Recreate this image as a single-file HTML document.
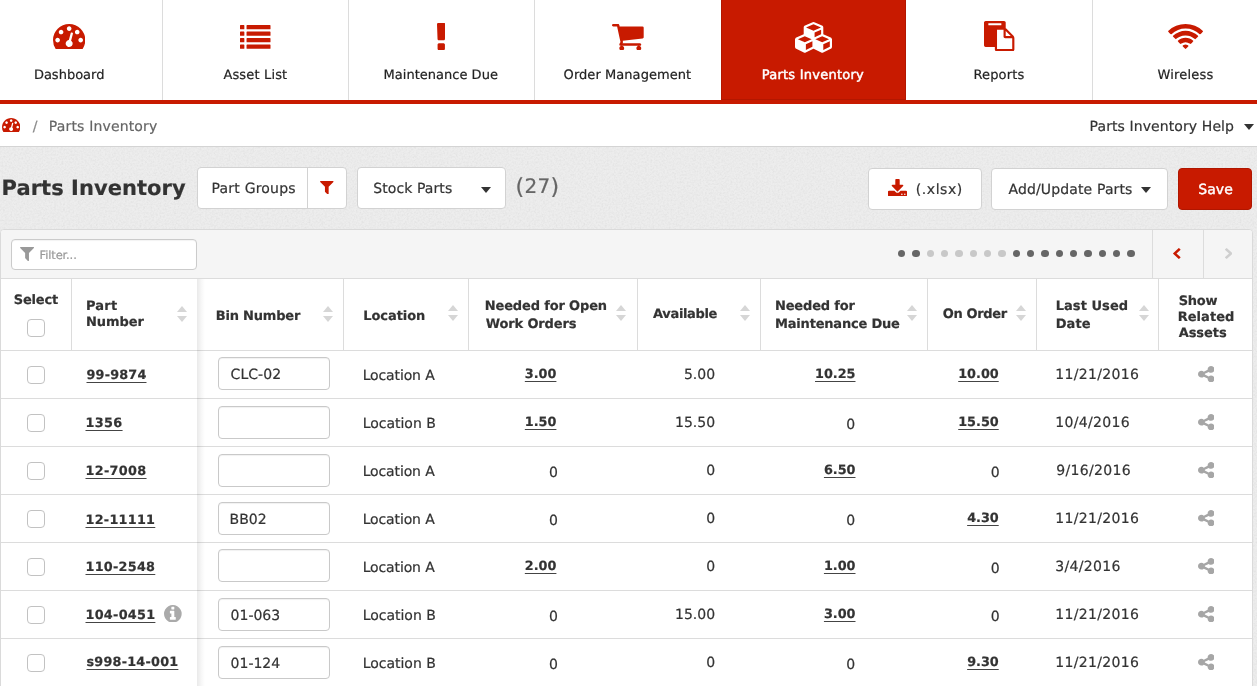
<!DOCTYPE html>
<html lang="en">
<head>
<meta charset="utf-8">
<title>Parts Inventory</title>
<style>
*{box-sizing:border-box;}
html,body{margin:0;padding:0;}
body{text-rendering:geometricPrecision;-webkit-text-stroke:0.2px;width:1257px;height:686px;overflow:hidden;position:relative;background:#e9e9e9;font-family:"DejaVu Sans","Liberation Sans",sans-serif;font-size:14px;color:#333;}
#app{position:absolute;left:0;top:0;width:1257px;height:686px;overflow:hidden;background:#ededed;will-change:transform;transform:translateZ(0);}
svg{display:block;}
.tx{position:absolute;white-space:nowrap;margin:0;}
/* nav */
.nav{position:absolute;left:0;top:0;height:100px;width:1257px;background:#fff;}
.acttab{position:absolute;left:721px;top:0;width:185px;height:100px;background:#c81a00;border:1px solid #b31700;border-top:none;}
.redline{position:absolute;left:0;top:100px;width:1257px;height:4px;background:#c81a00;}
/* breadcrumb */
.crumb{position:absolute;left:0;top:104px;width:1257px;height:43px;background:#fff;border-bottom:1px solid #d4d4d4;}
.caret{position:absolute;width:0;height:0;border-left:5.5px solid transparent;border-right:5.5px solid transparent;border-top:6px solid #333;}
/* title bar */
.btn{position:absolute;background:#fff;border:1px solid #d2d2d2;border-radius:4px;}
.btn.save{background:#c81a00;border-color:#b01600;}
/* panel */
.panel{position:absolute;left:0;top:229px;width:1253px;height:470px;background:#fff;border:1px solid #dadada;border-radius:4px 4px 0 0;}
.toolbar{position:absolute;left:1px;top:230px;width:1251px;height:48px;background:#f5f5f5;border-radius:3px 3px 0 0;}
.hl{position:absolute;left:1px;width:1251px;height:1px;background:#dcdcdc;}
.vl{position:absolute;width:1px;background:#dcdcdc;}
.filter{position:absolute;left:11px;top:239px;width:186px;height:31px;background:#fff;border:1px solid #cbcbcb;border-radius:4px;box-shadow:inset 0 1px 1px rgba(0,0,0,.05);}
.dot{position:absolute;width:7.4px;height:7.4px;border-radius:50%;background:#666;}
.dot.l{background:#c8c8c8;}
.cb{position:absolute;width:18px;height:18px;border:1px solid #c2c2c2;border-radius:4px;background:#fff;}
.lk{font-weight:bold;text-decoration:underline;text-decoration-thickness:1px;text-underline-offset:3px;text-decoration-color:#444;}
.bin{position:absolute;width:112px;height:33px;border:1px solid #c9c9c9;border-radius:4px;background:#fff;box-shadow:inset 0 1px 1px rgba(0,0,0,.06);}
.shadow{position:absolute;left:197px;top:279px;width:8px;height:410px;background:linear-gradient(to right,rgba(0,0,0,.085),rgba(0,0,0,.03) 55%,rgba(0,0,0,0));pointer-events:none;}
.su,.sd{position:absolute;width:0;height:0;border-left:5.4px solid transparent;border-right:5.4px solid transparent;}
.su{border-bottom:6.2px solid #d6d6d6;}
.sd{border-top:6.2px solid #d6d6d6;}
</style>
</head>
<body>
<div id="app">
<svg class="noise" width="1257" height="686" style="position:absolute;left:0;top:0"><filter id="nz" x="0" y="0" width="100%" height="100%"><feTurbulence type="fractalNoise" baseFrequency="0.55" numOctaves="2" seed="7"/><feColorMatrix type="matrix" values="0 0 0 0 0  0 0 0 0 0  0 0 0 0 0  0.05 0.05 0.05 0 -0.064"/></filter><rect x="0" y="147" width="1257" height="539" filter="url(#nz)"/></svg>
<div class="nav"></div>
<div class="vl" style="left:162px;top:0;height:100px"></div>
<div class="vl" style="left:348px;top:0;height:100px"></div>
<div class="vl" style="left:534px;top:0;height:100px"></div>
<div class="vl" style="left:1092px;top:0;height:100px"></div>
<div class="acttab"></div>
<svg style="position:absolute;left:52.90px;top:23.90px" width="32.30" height="25.30" viewBox="0 -1280 1792 1408" preserveAspectRatio="none"><path fill="#c81a00" transform="scale(1,-1)" d="M346.5 293.5Q384 331 384 384Q384 437 346.5 474.5Q309 512 256 512Q203 512 165.5 474.5Q128 437 128 384Q128 331 165.5 293.5Q203 256 256 256Q309 256 346.5 293.5ZM538.5 741.5Q576 779 576 832Q576 885 538.5 922.5Q501 960 448 960Q395 960 357.5 922.5Q320 885 320 832Q320 779 357.5 741.5Q395 704 448 704Q501 704 538.5 741.5ZM1004 351 1105 733Q1111 759 1097.5 781.5Q1084 804 1059 811Q1034 818 1011 804.5Q988 791 981 765L880 383Q820 378 773 339.5Q726 301 710 241Q690 164 730 95Q770 26 847 6Q924 -14 993 26Q1062 66 1082 143Q1098 203 1076 260Q1054 317 1004 351ZM1626.5 293.5Q1664 331 1664 384Q1664 437 1626.5 474.5Q1589 512 1536 512Q1483 512 1445.5 474.5Q1408 437 1408 384Q1408 331 1445.5 293.5Q1483 256 1536 256Q1589 256 1626.5 293.5ZM986.5 933.5Q1024 971 1024 1024Q1024 1077 986.5 1114.5Q949 1152 896 1152Q843 1152 805.5 1114.5Q768 1077 768 1024Q768 971 805.5 933.5Q843 896 896 896Q949 896 986.5 933.5ZM1434.5 741.5Q1472 779 1472 832Q1472 885 1434.5 922.5Q1397 960 1344 960Q1291 960 1253.5 922.5Q1216 885 1216 832Q1216 779 1253.5 741.5Q1291 704 1344 704Q1397 704 1434.5 741.5ZM1792 384Q1792 123 1651 -99Q1632 -128 1597 -128H195Q160 -128 141 -99Q0 122 0 384Q0 566 71 732Q142 898 262 1018Q382 1138 548 1209Q714 1280 896 1280Q1078 1280 1244 1209Q1410 1138 1530 1018Q1650 898 1721 732Q1792 566 1792 384Z"/></svg>
<div class="tx " style="top:68.00px;font-size:13px;line-height:16px;color:#222;left:33.90px;letter-spacing:0.003px;">Dashboard</div>
<svg style="position:absolute;left:240.20px;top:25.20px" width="30.50" height="23.80" viewBox="0 -1408 1792 1408" preserveAspectRatio="none"><path fill="#c81a00" transform="scale(1,-1)" d="M256 224V32Q256 19 246.5 9.5Q237 0 224 0H32Q19 0 9.5 9.5Q0 19 0 32V224Q0 237 9.5 246.5Q19 256 32 256H224Q237 256 246.5 246.5Q256 237 256 224ZM256 608V416Q256 403 246.5 393.5Q237 384 224 384H32Q19 384 9.5 393.5Q0 403 0 416V608Q0 621 9.5 630.5Q19 640 32 640H224Q237 640 246.5 630.5Q256 621 256 608ZM256 992V800Q256 787 246.5 777.5Q237 768 224 768H32Q19 768 9.5 777.5Q0 787 0 800V992Q0 1005 9.5 1014.5Q19 1024 32 1024H224Q237 1024 246.5 1014.5Q256 1005 256 992ZM1792 224V32Q1792 19 1782.5 9.5Q1773 0 1760 0H416Q403 0 393.5 9.5Q384 19 384 32V224Q384 237 393.5 246.5Q403 256 416 256H1760Q1773 256 1782.5 246.5Q1792 237 1792 224ZM256 1376V1184Q256 1171 246.5 1161.5Q237 1152 224 1152H32Q19 1152 9.5 1161.5Q0 1171 0 1184V1376Q0 1389 9.5 1398.5Q19 1408 32 1408H224Q237 1408 246.5 1398.5Q256 1389 256 1376ZM1792 608V416Q1792 403 1782.5 393.5Q1773 384 1760 384H416Q403 384 393.5 393.5Q384 403 384 416V608Q384 621 393.5 630.5Q403 640 416 640H1760Q1773 640 1782.5 630.5Q1792 621 1792 608ZM1792 992V800Q1792 787 1782.5 777.5Q1773 768 1760 768H416Q403 768 393.5 777.5Q384 787 384 800V992Q384 1005 393.5 1014.5Q403 1024 416 1024H1760Q1773 1024 1782.5 1014.5Q1792 1005 1792 992ZM1792 1376V1184Q1792 1171 1782.5 1161.5Q1773 1152 1760 1152H416Q403 1152 393.5 1161.5Q384 1171 384 1184V1376Q384 1389 393.5 1398.5Q403 1408 416 1408H1760Q1773 1408 1782.5 1398.5Q1792 1389 1792 1376Z"/></svg>
<div class="tx " style="top:68.00px;font-size:13px;line-height:16px;color:#222;left:223.40px;letter-spacing:0.156px;">Asset List</div>
<svg style="position:absolute;left:436.70px;top:22.90px" width="8.50" height="27.10" viewBox="97.9487 -1408 444.103 1408" preserveAspectRatio="none"><path fill="#c81a00" transform="scale(1,-1)" d="M512 288V64Q512 38 493 19Q474 0 448 0H192Q166 0 147 19Q128 38 128 64V288Q128 314 147 333Q166 352 192 352H448Q474 352 493 333Q512 314 512 288ZM542 1344 514 576Q513 550 493.5 531Q474 512 448 512H192Q166 512 146.5 531Q127 550 126 576L98 1344Q97 1370 115.5 1389Q134 1408 160 1408H480Q506 1408 524.5 1389Q543 1370 542 1344Z"/></svg>
<div class="tx " style="top:68.00px;font-size:13px;line-height:16px;color:#222;left:383.60px;letter-spacing:0.014px;">Maintenance Due</div>
<svg style="position:absolute;left:611.95px;top:23.50px" width="31.70" height="26.60" viewBox="0 -1280 1664 1408" preserveAspectRatio="none"><path fill="#c81a00" transform="scale(1,-1)" d="M602 90Q640 52 640 0Q640 -52 602 -90Q564 -128 512 -128Q460 -128 422 -90Q384 -52 384 0Q384 52 422 90Q460 128 512 128Q564 128 602 90ZM1498 90Q1536 52 1536 0Q1536 -52 1498 -90Q1460 -128 1408 -128Q1356 -128 1318 -90Q1280 -52 1280 0Q1280 52 1318 90Q1356 128 1408 128Q1460 128 1498 90ZM1664 1088V576Q1664 552 1647.5 533.5Q1631 515 1607 512L563 390Q576 330 576 320Q576 304 552 256H1472Q1498 256 1517 237Q1536 218 1536 192Q1536 166 1517 147Q1498 128 1472 128H448Q422 128 403 147Q384 166 384 192Q384 203 392 223.5Q400 244 408 259.5Q416 275 429.5 299.5Q443 324 445 329L268 1152H64Q38 1152 19 1171Q0 1190 0 1216Q0 1242 19 1261Q38 1280 64 1280H320Q336 1280 348.5 1273.5Q361 1267 368 1258Q375 1249 381 1233.5Q387 1218 389 1207.5Q391 1197 394.5 1178Q398 1159 399 1152H1600Q1626 1152 1645 1133Q1664 1114 1664 1088Z"/></svg>
<div class="tx " style="top:68.00px;font-size:13px;line-height:16px;color:#222;left:563.60px;letter-spacing:0.059px;">Order Management</div>
<svg style="position:absolute;left:794.80px;top:21.90px" width="37.00" height="30.80" viewBox="0 -1536 2176 1792" preserveAspectRatio="none"><path fill="#fff" transform="scale(1,-1)" d="M640 -96 1024 96V410L640 246ZM576 358 980 531 576 704 172 531ZM1664 -96 2048 96V410L1664 246ZM1600 358 2004 531 1600 704 1196 531ZM1152 651 1536 816V1082L1152 918ZM1088 1030 1529 1219 1088 1408 647 1219ZM2176 512V96Q2176 60 2157 29Q2138 -2 2105 -18L1657 -242Q1632 -256 1600 -256Q1568 -256 1543 -242L1095 -18Q1091 -16 1088 -14Q1086 -16 1081 -18L633 -242Q608 -256 576 -256Q544 -256 519 -242L71 -18Q38 -2 19 29Q0 60 0 96V512Q0 550 21.5 582Q43 614 78 630L512 816V1216Q512 1254 533.5 1286Q555 1318 590 1334L1038 1526Q1061 1536 1088 1536Q1115 1536 1138 1526L1586 1334Q1621 1318 1642.5 1286Q1664 1254 1664 1216V816L2098 630Q2134 614 2155 582Q2176 550 2176 512Z"/></svg>
<div class="tx " style="top:68.00px;font-size:13px;line-height:16px;color:#fff;left:761.70px;letter-spacing:0.245px;-webkit-text-stroke:0.45px;">Parts Inventory</div>
<svg style="position:absolute;left:984.20px;top:20.90px" width="30.40" height="30.20" viewBox="0 -1536 1792 1792" preserveAspectRatio="none"><path fill="#c81a00" transform="scale(1,-1)" d="M768 -128H1664V512H1248Q1208 512 1180 540Q1152 568 1152 608V1024H768ZM1024 1312V1376Q1024 1389 1014.5 1398.5Q1005 1408 992 1408H288Q275 1408 265.5 1398.5Q256 1389 256 1376V1312Q256 1299 265.5 1289.5Q275 1280 288 1280H992Q1005 1280 1014.5 1289.5Q1024 1299 1024 1312ZM1280 640H1579L1280 939ZM1792 512V-160Q1792 -200 1764 -228Q1736 -256 1696 -256H736Q696 -256 668 -228Q640 -200 640 -160V0H96Q56 0 28 28Q0 56 0 96V1440Q0 1480 28 1508Q56 1536 96 1536H1184Q1224 1536 1252 1508Q1280 1480 1280 1440V1112Q1301 1099 1316 1084L1724 676Q1752 648 1772 600Q1792 552 1792 512Z"/></svg>
<div class="tx " style="top:68.00px;font-size:13px;line-height:16px;color:#222;left:973.40px;letter-spacing:0.151px;">Reports</div>
<svg style="position:absolute;left:1167.80px;top:23.85px" width="35.10" height="24.90" viewBox="42 -1408 1964 1395" preserveAspectRatio="none"><path fill="#c81a00" transform="scale(1,-1)" d="M858 180Q858 212 920.5 234Q983 256 1024 256Q1065 256 1127.5 234Q1190 212 1190 180Q1190 160 1117 86.5Q1044 13 1024 13Q1004 13 931 86.5Q858 160 858 180ZM1294 284Q1292 284 1254 309Q1216 334 1152.5 359Q1089 384 1024 384Q959 384 895.5 359Q832 334 794.5 309Q757 284 754 284Q736 284 660.5 359Q585 434 585 452Q585 465 595 475Q673 552 791 596Q909 640 1024 640Q1139 640 1257 596Q1375 552 1453 475Q1463 465 1463 452Q1463 434 1387.5 359Q1312 284 1294 284ZM1567 556Q1556 556 1544 564Q1408 669 1292 718.5Q1176 768 1024 768Q939 768 853.5 746Q768 724 704.5 693Q641 662 591 631Q541 600 512 578Q483 556 481 556Q464 556 389 631Q314 706 314 724Q314 736 324 746Q456 878 644 951Q832 1024 1024 1024Q1216 1024 1404 951Q1592 878 1724 746Q1734 736 1734 724Q1734 706 1659 631Q1584 556 1567 556ZM1838 827Q1827 827 1816 836Q1637 993 1444.5 1072.5Q1252 1152 1024 1152Q796 1152 603.5 1072.5Q411 993 232 836Q221 827 210 827Q193 827 117.5 902Q42 977 42 995Q42 1008 52 1018Q239 1204 497 1306Q755 1408 1024 1408Q1293 1408 1551 1306Q1809 1204 1996 1018Q2006 1008 2006 995Q2006 977 1930.5 902Q1855 827 1838 827Z"/></svg>
<div class="tx " style="top:68.00px;font-size:13px;line-height:16px;color:#222;left:1157.60px;letter-spacing:0.169px;">Wireless</div>
<div class="redline"></div>
<div class="crumb"></div>
<svg style="position:absolute;left:2.00px;top:117.80px" width="18.30" height="14.40" viewBox="0 -1280 1792 1408" preserveAspectRatio="none"><path fill="#c81a00" transform="scale(1,-1)" d="M346.5 293.5Q384 331 384 384Q384 437 346.5 474.5Q309 512 256 512Q203 512 165.5 474.5Q128 437 128 384Q128 331 165.5 293.5Q203 256 256 256Q309 256 346.5 293.5ZM538.5 741.5Q576 779 576 832Q576 885 538.5 922.5Q501 960 448 960Q395 960 357.5 922.5Q320 885 320 832Q320 779 357.5 741.5Q395 704 448 704Q501 704 538.5 741.5ZM1004 351 1105 733Q1111 759 1097.5 781.5Q1084 804 1059 811Q1034 818 1011 804.5Q988 791 981 765L880 383Q820 378 773 339.5Q726 301 710 241Q690 164 730 95Q770 26 847 6Q924 -14 993 26Q1062 66 1082 143Q1098 203 1076 260Q1054 317 1004 351ZM1626.5 293.5Q1664 331 1664 384Q1664 437 1626.5 474.5Q1589 512 1536 512Q1483 512 1445.5 474.5Q1408 437 1408 384Q1408 331 1445.5 293.5Q1483 256 1536 256Q1589 256 1626.5 293.5ZM986.5 933.5Q1024 971 1024 1024Q1024 1077 986.5 1114.5Q949 1152 896 1152Q843 1152 805.5 1114.5Q768 1077 768 1024Q768 971 805.5 933.5Q843 896 896 896Q949 896 986.5 933.5ZM1434.5 741.5Q1472 779 1472 832Q1472 885 1434.5 922.5Q1397 960 1344 960Q1291 960 1253.5 922.5Q1216 885 1216 832Q1216 779 1253.5 741.5Q1291 704 1344 704Q1397 704 1434.5 741.5ZM1792 384Q1792 123 1651 -99Q1632 -128 1597 -128H195Q160 -128 141 -99Q0 122 0 384Q0 566 71 732Q142 898 262 1018Q382 1138 548 1209Q714 1280 896 1280Q1078 1280 1244 1209Q1410 1138 1530 1018Q1650 898 1721 732Q1792 566 1792 384Z"/></svg>
<div class="tx " style="top:117.00px;font-size:14px;line-height:20px;color:#8a8a8a;left:32.80px;">/</div>
<div class="tx " style="top:117.00px;font-size:14px;line-height:20px;color:#666;left:48.80px;letter-spacing:0.160px;">Parts Inventory</div>
<div class="tx " style="top:117.00px;font-size:14px;line-height:20px;color:#333;left:1089.60px;letter-spacing:0.093px;">Parts Inventory Help</div>
<i class="caret" style="left:1243.7px;top:123.8px"></i>
<div class="tx " style="top:174.00px;font-size:21px;line-height:28px;color:#333;left:1.60px;font-weight:bold;letter-spacing:0.052px;">Parts Inventory</div>
<div class="btn" style="left:197px;top:167px;width:150px;height:42px;"></div>
<div class="vl" style="left:307px;top:168px;height:40px;background:#d2d2d2"></div>
<div class="tx " style="top:179.00px;font-size:14px;line-height:20px;color:#333;left:211.50px;letter-spacing:0.209px;">Part Groups</div>
<svg style="position:absolute;left:320.00px;top:180.80px" width="13.60" height="13.60" viewBox="-1.02083 -1280 1410.04 1408" preserveAspectRatio="none"><path fill="#c81a00" transform="scale(1,-1)" d="M1403 1241Q1420 1200 1389 1171L896 678V-64Q896 -106 857 -123Q844 -128 832 -128Q805 -128 787 -109L531 147Q512 166 512 192V678L19 1171Q-12 1200 5 1241Q22 1280 64 1280H1344Q1386 1280 1403 1241Z"/></svg>
<div class="btn" style="left:357px;top:167px;width:149px;height:42px;"></div>
<div class="tx " style="top:179.00px;font-size:14px;line-height:20px;color:#333;left:373.30px;letter-spacing:0.077px;">Stock Parts</div>
<i class="caret" style="left:480.7px;top:187px"></i>
<div class="tx " style="top:173.00px;font-size:20px;line-height:26px;color:#666;left:515.60px;letter-spacing:0.300px;"><span style="font-size:22px;position:relative;top:0.5px">(</span>27<span style="font-size:22px;position:relative;top:0.5px">)</span></div>
<div class="btn" style="left:868px;top:168px;width:114px;height:42px;"></div>
<svg style="position:absolute;left:888.30px;top:178.80px" width="19.00" height="17.50" viewBox="0 -1536 1664 1536" preserveAspectRatio="none"><path fill="#c81a00" transform="scale(1,-1)" d="M1261 147Q1280 166 1280 192Q1280 218 1261 237Q1242 256 1216 256Q1190 256 1171 237Q1152 218 1152 192Q1152 166 1171 147Q1190 128 1216 128Q1242 128 1261 147ZM1517 147Q1536 166 1536 192Q1536 218 1517 237Q1498 256 1472 256Q1446 256 1427 237Q1408 218 1408 192Q1408 166 1427 147Q1446 128 1472 128Q1498 128 1517 147ZM1664 416V96Q1664 56 1636 28Q1608 0 1568 0H96Q56 0 28 28Q0 56 0 96V416Q0 456 28 484Q56 512 96 512H561L696 376Q754 320 832 320Q910 320 968 376L1104 512H1568Q1608 512 1636 484Q1664 456 1664 416ZM1339 985Q1356 944 1325 915L877 467Q859 448 832 448Q805 448 787 467L339 915Q308 944 325 985Q342 1024 384 1024H640V1472Q640 1498 659 1517Q678 1536 704 1536H960Q986 1536 1005 1517Q1024 1498 1024 1472V1024H1280Q1322 1024 1339 985Z"/></svg>
<div class="tx " style="top:180.00px;font-size:14px;line-height:20px;color:#333;left:915.80px;letter-spacing:0.556px;">(.xlsx)</div>
<div class="btn" style="left:991px;top:168px;width:177px;height:42px;"></div>
<div class="tx " style="top:180.00px;font-size:14px;line-height:20px;color:#333;left:1008.50px;letter-spacing:0.133px;">Add/Update Parts</div>
<i class="caret" style="left:1141.3px;top:186.9px"></i>
<div class="btn save" style="left:1178px;top:168px;width:74px;height:42px;"></div>
<div class="tx " style="top:180.00px;font-size:14px;line-height:20px;color:#fff;left:1198.30px;letter-spacing:0.050px;-webkit-text-stroke:0.4px;">Save</div>
<div class="panel"></div><div class="toolbar"></div>
<div class="filter"></div>
<svg style="position:absolute;left:19.70px;top:246.90px" width="14.10" height="14.10" viewBox="-1.02083 -1280 1410.04 1408" preserveAspectRatio="none"><path fill="#999" transform="scale(1,-1)" d="M1403 1241Q1420 1200 1389 1171L896 678V-64Q896 -106 857 -123Q844 -128 832 -128Q805 -128 787 -109L531 147Q512 166 512 192V678L19 1171Q-12 1200 5 1241Q22 1280 64 1280H1344Q1386 1280 1403 1241Z"/></svg>
<div class="tx " style="top:247.00px;font-size:11.5px;line-height:16px;color:#999;left:39.60px;letter-spacing:-0.150px;">Filter...</div>
<i class="dot" style="left:898.10px;top:249.80px"></i>
<i class="dot" style="left:912.43px;top:249.80px"></i>
<i class="dot l" style="left:926.76px;top:249.80px"></i>
<i class="dot l" style="left:941.09px;top:249.80px"></i>
<i class="dot l" style="left:955.42px;top:249.80px"></i>
<i class="dot l" style="left:969.75px;top:249.80px"></i>
<i class="dot l" style="left:984.08px;top:249.80px"></i>
<i class="dot l" style="left:998.41px;top:249.80px"></i>
<i class="dot" style="left:1012.74px;top:249.80px"></i>
<i class="dot" style="left:1027.07px;top:249.80px"></i>
<i class="dot" style="left:1041.40px;top:249.80px"></i>
<i class="dot" style="left:1055.73px;top:249.80px"></i>
<i class="dot" style="left:1070.06px;top:249.80px"></i>
<i class="dot" style="left:1084.39px;top:249.80px"></i>
<i class="dot" style="left:1098.72px;top:249.80px"></i>
<i class="dot" style="left:1113.05px;top:249.80px"></i>
<i class="dot" style="left:1127.38px;top:249.80px"></i>
<div class="vl" style="left:1152px;top:230px;height:48px"></div>
<div class="vl" style="left:1203px;top:230px;height:48px"></div>
<svg style="position:absolute;left:1173.30px;top:248.00px" width="7.50" height="11.00" viewBox="154 -1510 1036 1612" preserveAspectRatio="none"><path fill="#c81a00" transform="scale(1,-1)" d="M1171 1235 640 704 1171 173Q1190 154 1190 128Q1190 102 1171 83L1005 -83Q986 -102 960 -102Q934 -102 915 -83L173 659Q154 678 154 704Q154 730 173 749L915 1491Q934 1510 960 1510Q986 1510 1005 1491L1171 1325Q1190 1306 1190 1280Q1190 1254 1171 1235Z"/></svg>
<svg style="position:absolute;left:1224.90px;top:248.00px" width="7.50" height="11.00" viewBox="90 -1510 1036 1612" preserveAspectRatio="none"><path fill="#cfcfcf" transform="scale(1,-1)" d="M1107 659 365 -83Q346 -102 320 -102Q294 -102 275 -83L109 83Q90 102 90 128Q90 154 109 173L640 704L109 1235Q90 1254 90 1280Q90 1306 109 1325L275 1491Q294 1510 320 1510Q346 1510 365 1491L1107 749Q1126 730 1126 704Q1126 678 1107 659Z"/></svg>
<div class="hl" style="top:278px"></div>
<div class="hl" style="top:350px"></div>
<div class="vl" style="left:71px;top:279px;height:71px"></div>
<div class="vl" style="left:343px;top:279px;height:71px"></div>
<div class="vl" style="left:468px;top:279px;height:71px"></div>
<div class="vl" style="left:637px;top:279px;height:71px"></div>
<div class="vl" style="left:760px;top:279px;height:71px"></div>
<div class="vl" style="left:927px;top:279px;height:71px"></div>
<div class="vl" style="left:1036px;top:279px;height:71px"></div>
<div class="vl" style="left:1158px;top:279px;height:71px"></div>
<div class="tx " style="top:292.00px;font-size:13px;line-height:18px;color:#333;left:13.70px;font-weight:bold;letter-spacing:-0.152px;">Select</div>
<i class="cb" style="left:27px;top:319px"></i>
<div class="tx " style="top:298.00px;font-size:13px;line-height:18px;color:#333;left:85.90px;font-weight:bold;letter-spacing:0.213px;">Part</div>
<div class="tx " style="top:314.00px;font-size:13px;line-height:18px;color:#333;left:85.90px;font-weight:bold;letter-spacing:-0.041px;">Number</div>
<i class="su" style="left:176.60px;top:306.00px"></i><i class="sd" style="left:176.60px;top:315.80px"></i>
<div class="tx " style="top:308.00px;font-size:13px;line-height:18px;color:#333;left:215.70px;font-weight:bold;letter-spacing:-0.183px;">Bin Number</div>
<i class="su" style="left:322.60px;top:305.90px"></i><i class="sd" style="left:322.60px;top:315.70px"></i>
<div class="tx " style="top:308.00px;font-size:13px;line-height:18px;color:#333;left:363.20px;font-weight:bold;letter-spacing:-0.056px;">Location</div>
<i class="su" style="left:447.70px;top:305.20px"></i><i class="sd" style="left:447.70px;top:315.00px"></i>
<div class="tx " style="top:298.00px;font-size:13px;line-height:18px;color:#333;left:484.75px;font-weight:bold;letter-spacing:-0.151px;">Needed for Open</div>
<div class="tx " style="top:316.00px;font-size:13px;line-height:18px;color:#333;left:485.75px;font-weight:bold;letter-spacing:-0.144px;">Work Orders</div>
<i class="su" style="left:616.40px;top:305.20px"></i><i class="sd" style="left:616.40px;top:315.00px"></i>
<div class="tx " style="top:306.00px;font-size:13px;line-height:18px;color:#333;left:653.10px;font-weight:bold;letter-spacing:-0.349px;">Available</div>
<i class="su" style="left:739.70px;top:305.20px"></i><i class="sd" style="left:739.70px;top:315.00px"></i>
<div class="tx " style="top:298.00px;font-size:13px;line-height:18px;color:#333;left:775.00px;font-weight:bold;letter-spacing:-0.173px;">Needed for</div>
<div class="tx " style="top:316.00px;font-size:13px;line-height:18px;color:#333;left:775.00px;font-weight:bold;letter-spacing:-0.195px;">Maintenance Due</div>
<i class="su" style="left:906.50px;top:305.20px"></i><i class="sd" style="left:906.50px;top:315.00px"></i>
<div class="tx " style="top:306.00px;font-size:13px;line-height:18px;color:#333;left:942.80px;font-weight:bold;letter-spacing:-0.360px;">On Order</div>
<i class="su" style="left:1015.80px;top:305.20px"></i><i class="sd" style="left:1015.80px;top:315.00px"></i>
<div class="tx " style="top:298.00px;font-size:13px;line-height:18px;color:#333;left:1055.70px;font-weight:bold;letter-spacing:0.057px;">Last Used</div>
<div class="tx " style="top:316.00px;font-size:13px;line-height:18px;color:#333;left:1055.70px;font-weight:bold;letter-spacing:0.107px;">Date</div>
<i class="su" style="left:1138.60px;top:305.20px"></i><i class="sd" style="left:1138.60px;top:315.00px"></i>
<div class="tx " style="top:293.00px;font-size:13px;line-height:18px;color:#333;left:1178.70px;font-weight:bold;letter-spacing:-0.283px;">Show</div>
<div class="tx " style="top:309.00px;font-size:13px;line-height:18px;color:#333;left:1177.70px;font-weight:bold;letter-spacing:0.036px;">Related</div>
<div class="tx " style="top:325.00px;font-size:13px;line-height:18px;color:#333;left:1178.70px;font-weight:bold;letter-spacing:-0.074px;">Assets</div>
<i class="cb" style="left:27px;top:366px"></i>
<div class="tx lk" style="top:367.00px;font-size:12.8px;line-height:18px;color:#333;left:86.50px;letter-spacing:0.178px;">99-9874</div>
<i class="bin" style="left:218px;top:357px"></i>
<div class="tx " style="top:365.00px;font-size:14px;line-height:20px;color:#333;left:230.60px;letter-spacing:0.058px;">CLC-02</div>
<div class="tx " style="top:366.00px;font-size:14px;line-height:20px;color:#333;left:362.70px;letter-spacing:-0.129px;">Location A</div>
<div class="tx lk" style="top:366.00px;font-size:12.8px;line-height:18px;color:#333;right:700.60px;">3.00</div>
<div class="tx " style="top:365.00px;font-size:14px;line-height:20px;color:#333;right:541.89px;">5.00</div>
<div class="tx lk" style="top:366.00px;font-size:12.8px;line-height:18px;color:#333;right:401.50px;">10.25</div>
<div class="tx lk" style="top:366.00px;font-size:12.8px;line-height:18px;color:#333;right:258.30px;">10.00</div>
<div class="tx " style="top:365.00px;font-size:14px;line-height:20px;color:#333;left:1055.20px;letter-spacing:0.350px;">11/21/2016</div>
<svg style="position:absolute;left:1197.70px;top:365.80px" width="16.50" height="16.30" viewBox="0 -1408 1536 1536" preserveAspectRatio="none"><path fill="#a6a6a6" transform="scale(1,-1)" d="M1216 512Q1349 512 1442.5 418.5Q1536 325 1536 192Q1536 59 1442.5 -34.5Q1349 -128 1216 -128Q1083 -128 989.5 -34.5Q896 59 896 192Q896 204 898 226L538 406Q446 320 320 320Q187 320 93.5 413.5Q0 507 0 640Q0 773 93.5 866.5Q187 960 320 960Q446 960 538 874L898 1054Q896 1076 896 1088Q896 1221 989.5 1314.5Q1083 1408 1216 1408Q1349 1408 1442.5 1314.5Q1536 1221 1536 1088Q1536 955 1442.5 861.5Q1349 768 1216 768Q1090 768 998 854L638 674Q640 652 640 640Q640 628 638 606L998 426Q1090 512 1216 512Z"/></svg>
<div class="hl" style="top:398px"></div>
<i class="cb" style="left:27px;top:414px"></i>
<div class="tx lk" style="top:415.00px;font-size:12.8px;line-height:18px;color:#333;left:85.50px;letter-spacing:0.363px;">1356</div>
<i class="bin" style="left:218px;top:406px"></i>
<div class="tx " style="top:414.00px;font-size:14px;line-height:20px;color:#333;left:362.70px;letter-spacing:-0.018px;">Location B</div>
<div class="tx lk" style="top:414.00px;font-size:12.8px;line-height:18px;color:#333;right:700.60px;">1.50</div>
<div class="tx " style="top:413.00px;font-size:14px;line-height:20px;color:#333;right:541.89px;">15.50</div>
<div class="tx " style="top:415.00px;font-size:14px;line-height:20px;color:#333;right:401.89px;">0</div>
<div class="tx lk" style="top:414.00px;font-size:12.8px;line-height:18px;color:#333;right:258.30px;">15.50</div>
<div class="tx " style="top:413.00px;font-size:14px;line-height:20px;color:#333;left:1055.20px;letter-spacing:0.350px;">10/4/2016</div>
<svg style="position:absolute;left:1197.70px;top:413.80px" width="16.50" height="16.30" viewBox="0 -1408 1536 1536" preserveAspectRatio="none"><path fill="#a6a6a6" transform="scale(1,-1)" d="M1216 512Q1349 512 1442.5 418.5Q1536 325 1536 192Q1536 59 1442.5 -34.5Q1349 -128 1216 -128Q1083 -128 989.5 -34.5Q896 59 896 192Q896 204 898 226L538 406Q446 320 320 320Q187 320 93.5 413.5Q0 507 0 640Q0 773 93.5 866.5Q187 960 320 960Q446 960 538 874L898 1054Q896 1076 896 1088Q896 1221 989.5 1314.5Q1083 1408 1216 1408Q1349 1408 1442.5 1314.5Q1536 1221 1536 1088Q1536 955 1442.5 861.5Q1349 768 1216 768Q1090 768 998 854L638 674Q640 652 640 640Q640 628 638 606L998 426Q1090 512 1216 512Z"/></svg>
<div class="hl" style="top:446px"></div>
<i class="cb" style="left:27px;top:462px"></i>
<div class="tx lk" style="top:463.00px;font-size:12.8px;line-height:18px;color:#333;left:85.50px;letter-spacing:0.328px;">12-7008</div>
<i class="bin" style="left:218px;top:454px"></i>
<div class="tx " style="top:462.00px;font-size:14px;line-height:20px;color:#333;left:362.70px;letter-spacing:-0.129px;">Location A</div>
<div class="tx " style="top:463.00px;font-size:14px;line-height:20px;color:#333;right:698.99px;">0</div>
<div class="tx " style="top:461.00px;font-size:14px;line-height:20px;color:#333;right:541.89px;">0</div>
<div class="tx lk" style="top:462.00px;font-size:12.8px;line-height:18px;color:#333;right:401.50px;">6.50</div>
<div class="tx " style="top:463.00px;font-size:14px;line-height:20px;color:#333;right:257.29px;">0</div>
<div class="tx " style="top:461.00px;font-size:14px;line-height:20px;color:#333;left:1056.20px;letter-spacing:0.350px;">9/16/2016</div>
<svg style="position:absolute;left:1197.70px;top:461.80px" width="16.50" height="16.30" viewBox="0 -1408 1536 1536" preserveAspectRatio="none"><path fill="#a6a6a6" transform="scale(1,-1)" d="M1216 512Q1349 512 1442.5 418.5Q1536 325 1536 192Q1536 59 1442.5 -34.5Q1349 -128 1216 -128Q1083 -128 989.5 -34.5Q896 59 896 192Q896 204 898 226L538 406Q446 320 320 320Q187 320 93.5 413.5Q0 507 0 640Q0 773 93.5 866.5Q187 960 320 960Q446 960 538 874L898 1054Q896 1076 896 1088Q896 1221 989.5 1314.5Q1083 1408 1216 1408Q1349 1408 1442.5 1314.5Q1536 1221 1536 1088Q1536 955 1442.5 861.5Q1349 768 1216 768Q1090 768 998 854L638 674Q640 652 640 640Q640 628 638 606L998 426Q1090 512 1216 512Z"/></svg>
<div class="hl" style="top:494px"></div>
<i class="cb" style="left:27px;top:510px"></i>
<div class="tx lk" style="top:512.00px;font-size:12.8px;line-height:18px;color:#333;left:85.50px;letter-spacing:0.266px;">12-11111</div>
<i class="bin" style="left:218px;top:502px"></i>
<div class="tx " style="top:510.00px;font-size:14px;line-height:20px;color:#333;left:229.60px;">BB02</div>
<div class="tx " style="top:510.00px;font-size:14px;line-height:20px;color:#333;left:362.70px;letter-spacing:-0.129px;">Location A</div>
<div class="tx " style="top:511.00px;font-size:14px;line-height:20px;color:#333;right:698.99px;">0</div>
<div class="tx " style="top:509.00px;font-size:14px;line-height:20px;color:#333;right:541.89px;">0</div>
<div class="tx " style="top:511.00px;font-size:14px;line-height:20px;color:#333;right:401.89px;">0</div>
<div class="tx lk" style="top:510.00px;font-size:12.8px;line-height:18px;color:#333;right:258.30px;">4.30</div>
<div class="tx " style="top:509.00px;font-size:14px;line-height:20px;color:#333;left:1055.20px;letter-spacing:0.350px;">11/21/2016</div>
<svg style="position:absolute;left:1197.70px;top:509.80px" width="16.50" height="16.30" viewBox="0 -1408 1536 1536" preserveAspectRatio="none"><path fill="#a6a6a6" transform="scale(1,-1)" d="M1216 512Q1349 512 1442.5 418.5Q1536 325 1536 192Q1536 59 1442.5 -34.5Q1349 -128 1216 -128Q1083 -128 989.5 -34.5Q896 59 896 192Q896 204 898 226L538 406Q446 320 320 320Q187 320 93.5 413.5Q0 507 0 640Q0 773 93.5 866.5Q187 960 320 960Q446 960 538 874L898 1054Q896 1076 896 1088Q896 1221 989.5 1314.5Q1083 1408 1216 1408Q1349 1408 1442.5 1314.5Q1536 1221 1536 1088Q1536 955 1442.5 861.5Q1349 768 1216 768Q1090 768 998 854L638 674Q640 652 640 640Q640 628 638 606L998 426Q1090 512 1216 512Z"/></svg>
<div class="hl" style="top:542px"></div>
<i class="cb" style="left:27px;top:558px"></i>
<div class="tx lk" style="top:559.00px;font-size:12.8px;line-height:18px;color:#333;left:85.50px;letter-spacing:0.266px;">110-2548</div>
<i class="bin" style="left:218px;top:549px"></i>
<div class="tx " style="top:558.00px;font-size:14px;line-height:20px;color:#333;left:362.70px;letter-spacing:-0.129px;">Location A</div>
<div class="tx lk" style="top:558.00px;font-size:12.8px;line-height:18px;color:#333;right:700.60px;">2.00</div>
<div class="tx " style="top:557.00px;font-size:14px;line-height:20px;color:#333;right:541.89px;">0</div>
<div class="tx lk" style="top:558.00px;font-size:12.8px;line-height:18px;color:#333;right:401.50px;">1.00</div>
<div class="tx " style="top:559.00px;font-size:14px;line-height:20px;color:#333;right:257.29px;">0</div>
<div class="tx " style="top:557.00px;font-size:14px;line-height:20px;color:#333;left:1055.20px;letter-spacing:0.350px;">3/4/2016</div>
<svg style="position:absolute;left:1197.70px;top:557.80px" width="16.50" height="16.30" viewBox="0 -1408 1536 1536" preserveAspectRatio="none"><path fill="#a6a6a6" transform="scale(1,-1)" d="M1216 512Q1349 512 1442.5 418.5Q1536 325 1536 192Q1536 59 1442.5 -34.5Q1349 -128 1216 -128Q1083 -128 989.5 -34.5Q896 59 896 192Q896 204 898 226L538 406Q446 320 320 320Q187 320 93.5 413.5Q0 507 0 640Q0 773 93.5 866.5Q187 960 320 960Q446 960 538 874L898 1054Q896 1076 896 1088Q896 1221 989.5 1314.5Q1083 1408 1216 1408Q1349 1408 1442.5 1314.5Q1536 1221 1536 1088Q1536 955 1442.5 861.5Q1349 768 1216 768Q1090 768 998 854L638 674Q640 652 640 640Q640 628 638 606L998 426Q1090 512 1216 512Z"/></svg>
<div class="hl" style="top:590px"></div>
<i class="cb" style="left:27px;top:606px"></i>
<div class="tx lk" style="top:607.00px;font-size:12.8px;line-height:18px;color:#333;left:85.50px;letter-spacing:0.281px;">104-0451</div>
<svg style="position:absolute;left:164.10px;top:604.70px" width="17.70" height="17.60" viewBox="0 -1408 1536 1536" preserveAspectRatio="none"><path fill="#aaa" transform="scale(1,-1)" d="M1024 160V320Q1024 334 1015 343Q1006 352 992 352H896V864Q896 878 887 887Q878 896 864 896H544Q530 896 521 887Q512 878 512 864V704Q512 690 521 681Q530 672 544 672H640V352H544Q530 352 521 343Q512 334 512 320V160Q512 146 521 137Q530 128 544 128H992Q1006 128 1015 137Q1024 146 1024 160ZM896 1056V1216Q896 1230 887 1239Q878 1248 864 1248H672Q658 1248 649 1239Q640 1230 640 1216V1056Q640 1042 649 1033Q658 1024 672 1024H864Q878 1024 887 1033Q896 1042 896 1056ZM1433 1025.5Q1536 849 1536 640Q1536 431 1433 254.5Q1330 78 1153.5 -25Q977 -128 768 -128Q559 -128 382.5 -25Q206 78 103 254.5Q0 431 0 640Q0 849 103 1025.5Q206 1202 382.5 1305Q559 1408 768 1408Q977 1408 1153.5 1305Q1330 1202 1433 1025.5Z"/></svg>
<i class="bin" style="left:218px;top:598px"></i>
<div class="tx " style="top:606.00px;font-size:14px;line-height:20px;color:#333;left:230.60px;">01-063</div>
<div class="tx " style="top:606.00px;font-size:14px;line-height:20px;color:#333;left:362.70px;letter-spacing:-0.018px;">Location B</div>
<div class="tx " style="top:607.00px;font-size:14px;line-height:20px;color:#333;right:698.99px;">0</div>
<div class="tx " style="top:605.00px;font-size:14px;line-height:20px;color:#333;right:541.89px;">15.00</div>
<div class="tx lk" style="top:606.00px;font-size:12.8px;line-height:18px;color:#333;right:401.50px;">3.00</div>
<div class="tx " style="top:607.00px;font-size:14px;line-height:20px;color:#333;right:257.29px;">0</div>
<div class="tx " style="top:605.00px;font-size:14px;line-height:20px;color:#333;left:1055.20px;letter-spacing:0.350px;">11/21/2016</div>
<svg style="position:absolute;left:1197.70px;top:605.80px" width="16.50" height="16.30" viewBox="0 -1408 1536 1536" preserveAspectRatio="none"><path fill="#a6a6a6" transform="scale(1,-1)" d="M1216 512Q1349 512 1442.5 418.5Q1536 325 1536 192Q1536 59 1442.5 -34.5Q1349 -128 1216 -128Q1083 -128 989.5 -34.5Q896 59 896 192Q896 204 898 226L538 406Q446 320 320 320Q187 320 93.5 413.5Q0 507 0 640Q0 773 93.5 866.5Q187 960 320 960Q446 960 538 874L898 1054Q896 1076 896 1088Q896 1221 989.5 1314.5Q1083 1408 1216 1408Q1349 1408 1442.5 1314.5Q1536 1221 1536 1088Q1536 955 1442.5 861.5Q1349 768 1216 768Q1090 768 998 854L638 674Q640 652 640 640Q640 628 638 606L998 426Q1090 512 1216 512Z"/></svg>
<div class="hl" style="top:638px"></div>
<i class="cb" style="left:27px;top:654px"></i>
<div class="tx lk" style="top:654.00px;font-size:12.8px;line-height:18px;color:#333;left:86.50px;letter-spacing:0.218px;">s998-14-001</div>
<i class="bin" style="left:218px;top:646px"></i>
<div class="tx " style="top:654.00px;font-size:14px;line-height:20px;color:#333;left:230.60px;">01-124</div>
<div class="tx " style="top:654.00px;font-size:14px;line-height:20px;color:#333;left:362.70px;letter-spacing:-0.018px;">Location B</div>
<div class="tx " style="top:655.00px;font-size:14px;line-height:20px;color:#333;right:698.99px;">0</div>
<div class="tx " style="top:653.00px;font-size:14px;line-height:20px;color:#333;right:541.89px;">0</div>
<div class="tx " style="top:655.00px;font-size:14px;line-height:20px;color:#333;right:401.89px;">0</div>
<div class="tx lk" style="top:654.00px;font-size:12.8px;line-height:18px;color:#333;right:258.30px;">9.30</div>
<div class="tx " style="top:653.00px;font-size:14px;line-height:20px;color:#333;left:1055.20px;letter-spacing:0.350px;">11/21/2016</div>
<svg style="position:absolute;left:1197.70px;top:653.80px" width="16.50" height="16.30" viewBox="0 -1408 1536 1536" preserveAspectRatio="none"><path fill="#a6a6a6" transform="scale(1,-1)" d="M1216 512Q1349 512 1442.5 418.5Q1536 325 1536 192Q1536 59 1442.5 -34.5Q1349 -128 1216 -128Q1083 -128 989.5 -34.5Q896 59 896 192Q896 204 898 226L538 406Q446 320 320 320Q187 320 93.5 413.5Q0 507 0 640Q0 773 93.5 866.5Q187 960 320 960Q446 960 538 874L898 1054Q896 1076 896 1088Q896 1221 989.5 1314.5Q1083 1408 1216 1408Q1349 1408 1442.5 1314.5Q1536 1221 1536 1088Q1536 955 1442.5 861.5Q1349 768 1216 768Q1090 768 998 854L638 674Q640 652 640 640Q640 628 638 606L998 426Q1090 512 1216 512Z"/></svg>
<div class="hl" style="top:686px"></div>
<div class="shadow"></div>
</div>
</body>
</html>
